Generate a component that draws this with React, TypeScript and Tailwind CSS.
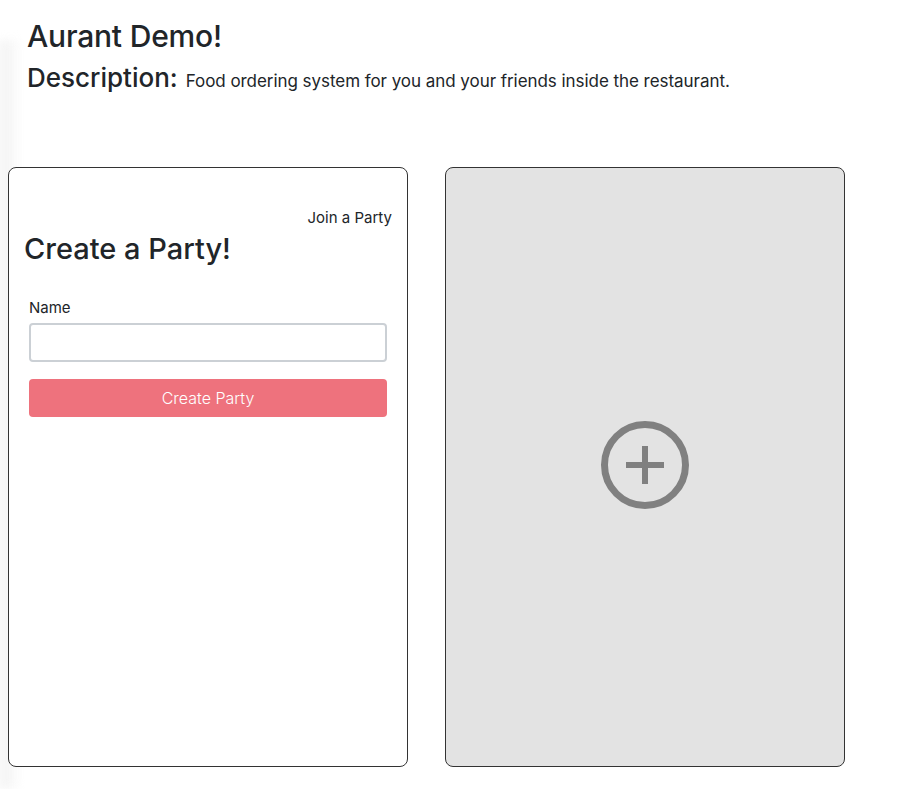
import React from "react";

export default function App() {
  return (
    <div
      className="relative w-[903px] h-[789px] bg-white text-[#212529] overflow-hidden"
      style={{ fontFamily: "Inter, 'Noto Sans', sans-serif" }}
    >
      <div className="absolute left-0 top-[40px] w-[22px] h-[749px] bg-gradient-to-r from-[#ececec] to-white opacity-70 blur-[4px]" />
      <div className="relative">
        <div className="pl-[27px] pt-[18px]">
          <h1 className="text-[30px] leading-[36px] font-medium tracking-[-0.2px]">Aurant Demo!</h1>
          <div className="flex items-baseline mt-[8px]">
            <h2 className="text-[26px] leading-[32px] font-medium">Description:</h2>
            <span className="ml-[8px] text-[17px] tracking-[-0.05px]">
              Food ordering system for you and your friends inside the restaurant.
            </span>
          </div>
        </div>
        <div className="flex gap-[37px] pl-[8px] mt-[72px]">
          <div className="w-[400px] h-[600px] border border-[#333] rounded-[8px] bg-white px-[15px] pt-[40px]">
            <div className="text-right text-[15px] leading-[20px]">Join a Party</div>
            <h3 className="text-[29px] leading-[34px] font-medium mt-[4px]">Create a Party!</h3>
            <div className="px-[5px] mt-[32px]">
              <label className="block text-[15px] leading-[20px]">Name</label>
              <input
                className="block w-full h-[39px] mt-[5px] border-2 border-[#cbd0d5] rounded-[4px] bg-white outline-none"
                type="text"
              />
              <button className="block w-full h-[38px] mt-[17px] rounded-[4px] bg-[#ee727d] text-white text-[16px] font-light">
                Create Party
              </button>
            </div>
          </div>
          <div className="w-[400px] h-[600px] border border-[#333] rounded-[8px] bg-[#e3e3e3] flex items-center justify-center">
            <svg width="90" height="90" viewBox="0 0 90 90" className="mt-[-3px]">
              <circle cx="45" cy="45" r="40.5" fill="none" stroke="#808080" strokeWidth="7" />
              <line x1="26" y1="45" x2="64" y2="45" stroke="#808080" strokeWidth="6" />
              <line x1="45" y1="26" x2="45" y2="64" stroke="#808080" strokeWidth="6" />
            </svg>
          </div>
        </div>
      </div>
    </div>
  );
}
